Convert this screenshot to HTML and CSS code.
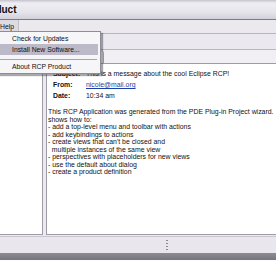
FILE: index.html
```html
<!DOCTYPE html>
<html>
<head>
<meta charset="utf-8">
<link rel="stylesheet" href="styles.css">
</head>
<body>
<div class="win">
  <div class="titlebar"><span class="title">RCP Product</span></div>
  <div class="menubar"><span class="mitem open">Help</span></div>
  <div class="toolbar"></div>
  <div class="views">
    <div class="view nav">
      <div class="tabrow"></div>
      <div class="vbody"></div>
    </div>
    <div class="view msg">
      <div class="tabrow"><div class="tab"></div></div>
      <div class="vbody">
        <div class="headers">
          <span class="lbl">Subject:</span><span class="val">This is a message about the cool Eclipse RCP!</span>
          <span class="lbl">From:</span><span class="val link">nicole@mail.org</span>
          <span class="lbl">Date:</span><span class="val">10:34 am</span>
        </div>
        <div class="text">
          <div>This RCP Application was generated from the PDE Plug-in Project wizard.</div>
          <div>shows how to:</div>
          <div>- add a top-level menu and toolbar with actions</div>
          <div>- add keybindings to actions</div>
          <div>- create views that can't be closed and</div>
          <div>&nbsp;&nbsp;multiple instances of the same view</div>
          <div>- perspectives with placeholders for new views</div>
          <div>- use the default about dialog</div>
          <div>- create a product definition</div>
        </div>
      </div>
    </div>
  </div>
  <div class="statusbar"><span class="grip"></span></div>
  <div class="framebottom"></div>

  <div class="menu">
    <div class="item">Check for Updates</div>
    <div class="item sel">Install New Software...</div>
    <div class="sep"></div>
    <div class="item">About RCP Product</div>
  </div>
</div>
</body>
</html>
```

FILE: styles.css
```css
html, body {
  margin: 0;
  padding: 0;
}
body {
  width: 276px;
  height: 260px;
  overflow: hidden;
  background: #ece9ef;
  font-family: "Liberation Sans", Arial, sans-serif;
  font-size: 6.9px;
  color: #111;
}
.win {
  position: relative;
  width: 276px;
  height: 260px;
  display: flex;
  flex-direction: column;
}
.titlebar {
  height: 19px;
  border-bottom: 1px solid #7d7c86;
  background: linear-gradient(#c4c3cc 0, #eeeef2 3px, #e6e5ec 12px, #d2d1da 19px);
  display: flex;
  align-items: center;
  overflow: hidden;
  white-space: nowrap;
}
.title {
  font-weight: bold;
  font-size: 10px;
  margin-left: -45px;
  color: #111;
}
.menubar {
  height: 13px;
  border-bottom: 1px solid #b9b6c0;
  background: #ebe8ee;
  display: flex;
  align-items: stretch;
}
.mitem {
  display: flex;
  align-items: center;
  padding: 0 5px 0 0;
  font-size: 6.8px;
}
.mitem.open {
  background: #dddae2;
  border-right: 1px solid #c0bdc7;
  border-bottom: 1px solid #c0bdc7;
  width: 13px;
}
.toolbar {
  height: 15px;
  border-bottom: 1px solid #b9b6c0;
  background: #ebe8ef;
}
.views {
  flex: 1;
  display: flex;
  gap: 3px;
  padding-bottom: 1px;
}
.view {
  display: flex;
  flex-direction: column;
  background: #fff;
  border: 1px solid #9e9ba6;
  border-top: none;
}
.view.nav {
  width: 42px;
  border-left: none;
}
.view.msg {
  flex: 1;
  border-right: none;
}
.tabrow {
  height: 13px;
  border-bottom: 1px solid #9e9ba6;
  background: #f1eff3;
  display: flex;
}
.tab {
  width: 56px;
  background: #fbfbfc;
  border-right: 1px solid #9e9ba6;
  border-top-right-radius: 4px;
}
.vbody {
  flex: 1;
  background: #fff;
}
.headers {
  display: grid;
  grid-template-columns: 33px auto;
  grid-auto-rows: 11px;
  align-items: center;
  padding: 4px 0 0 6px;
  white-space: nowrap;
}
.lbl {
  font-weight: bold;
}
.link {
  color: #1a3fa8;
  text-decoration: underline;
}
.text {
  margin-top: 7px;
  padding-left: 1px;
  line-height: 7.5px;
  white-space: nowrap;
}
.statusbar {
  height: 16px;
  border-top: 1px solid #c9c6cf;
  background: #e9e6ed;
  position: relative;
}
.grip {
  position: absolute;
  left: 166px;
  top: 3px;
  width: 2px;
  height: 10px;
  background: repeating-linear-gradient(#8a8792 0 1px, transparent 1px 3px);
}
.framebottom {
  height: 7px;
  background: linear-gradient(#8d8c94, #76757d);
}
.menu {
  position: absolute;
  left: -4px;
  top: 31px;
  width: 99px;
  padding: 1px 2px 1px 2px;
  background: #f6f5f8;
  border: 1px solid #8e8c96;
  box-shadow: 2px 2px 1px rgba(60, 60, 70, 0.45);
  font-size: 6.8px;
}
.item {
  height: 11px;
  display: flex;
  align-items: center;
  padding-left: 13px;
  white-space: nowrap;
}
.item.sel {
  background: #bcb9c9;
}
.sep {
  height: 1px;
  margin: 4px 1px 1px 1px;
  background: #a7a4ae;
}
```
